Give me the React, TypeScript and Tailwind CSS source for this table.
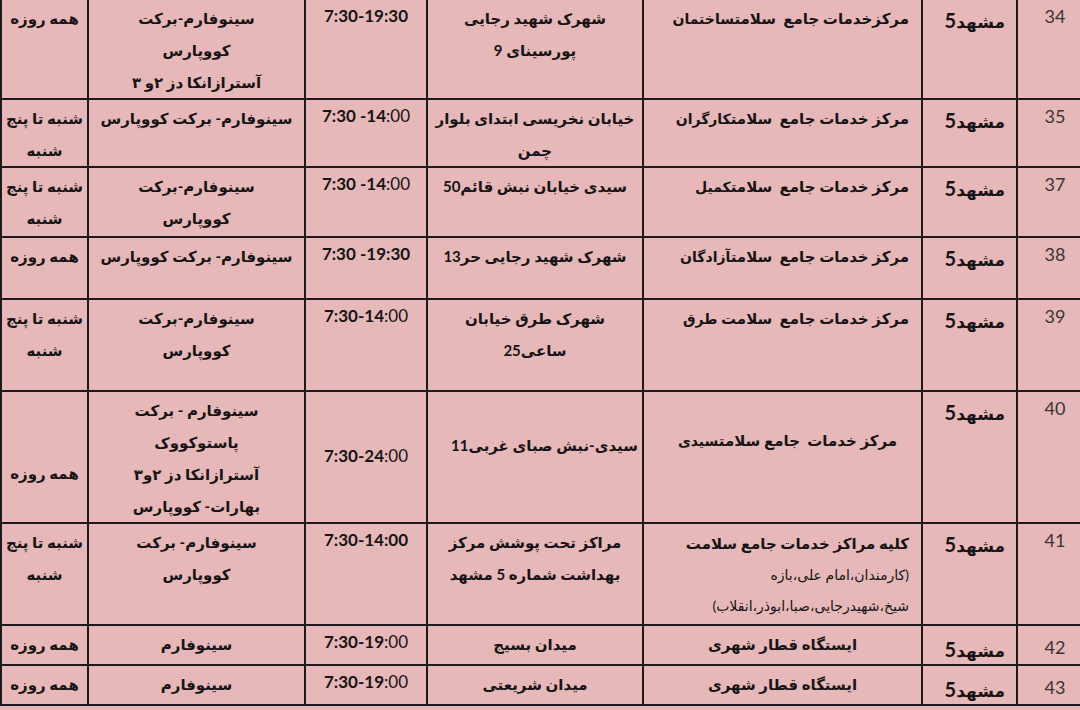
import React from 'react';

type Row = {
  num: string;
  h: string;
  days: React.ReactNode;
  daysPad?: string;
  vaccine: string[];
  hours: React.ReactNode;
  hoursPad?: string;
  address: string[];
  addressPad?: string;
  addressAlign?: string;
  center: React.ReactNode;
  centerPad?: string;
  centerAlign?: string;
  cityPad?: string;
  numPad?: string;
};

const Light = ({ children }: { children: React.ReactNode }) => (
  <span className="font-normal">{children}</span>
);

const allDays = 'همه روزه';
const weekDays = (
  <>
    شنبه تا پنج
    <br />
    شنبه
  </>
);

const Named = ({ base, name }: { base: string; name: string }) => (
  <span className="whitespace-pre">
    {base}
    <span className="font-black text-[14px]">{name}</span>
  </span>
);

const rows: Row[] = [
  {
    num: '34',
    h: 'h-[100px]',
    days: allDays,
    vaccine: ['سینوفارم-برکت', 'کووپارس', 'آسترازانکا دز ۲و ۳'],
    hours: '7:30-19:30',
    address: ['شهرک شهید رجایی', 'پورسینای 9'],
    center: <Named base="مرکزخدمات جامع  سلامت" name="ساختمان" />,
  },
  {
    num: '35',
    h: 'h-[68px]',
    days: weekDays,
    vaccine: ['سینوفارم- برکت کووپارس'],
    hours: (
      <>
        7:30 -14<Light>:00</Light>
      </>
    ),
    address: ['خیابان نخریسی ابتدای بلوار', 'چمن'],
    center: <Named base="مرکز خدمات جامع  سلامت" name="کارگران" />,
  },
  {
    num: '37',
    h: 'h-[70px]',
    days: weekDays,
    vaccine: ['سینوفارم-برکت', 'کووپارس'],
    hours: (
      <>
        7:30 -14<Light>:00</Light>
      </>
    ),
    address: ['سیدی خیابان نبش قائم50'],
    center: <Named base="مرکز خدمات جامع  سلامت" name="کمیل" />,
  },
  {
    num: '38',
    h: 'h-[62px]',
    days: allDays,
    vaccine: ['سینوفارم- برکت کووپارس'],
    hours: '7:30 -19:30',
    address: ['شهرک شهید رجایی حر13'],
    center: <Named base="مرکز خدمات جامع  سلامت" name="آزادگان" />,
  },
  {
    num: '39',
    h: 'h-[92px]',
    days: weekDays,
    vaccine: ['سینوفارم-برکت', 'کووپارس'],
    hours: (
      <>
        7:30-14<Light>:00</Light>
      </>
    ),
    address: ['شهرک طرق خیابان', 'ساعی25'],
    center: <Named base="مرکز خدمات جامع  سلامت " name="طرق" />,
  },
  {
    num: '40',
    h: 'h-[132px]',
    days: allDays,
    daysPad: 'pt-[65px]',
    vaccine: ['سینوفارم - برکت', 'پاستوکووک', 'آسترازانکا دز ۲و۳', 'بهارات- کووپارس'],
    hours: (
      <>
        7:30-24<Light>:00</Light>
      </>
    ),
    hoursPad: 'pt-[48px]',
    address: ['سیدی-نبش صبای غربی11'],
    addressPad: 'pt-[37px]',
    addressAlign: 'text-right pr-[4px]',
    center: <Named base="مرکز خدمات  جامع سلامت" name="سیدی" />,
    centerPad: 'pt-[32px]',
    centerAlign: 'text-center pl-[10px]',
  },
  {
    num: '41',
    h: 'h-[102px]',
    days: weekDays,
    vaccine: ['سینوفارم- برکت', 'کووپارس'],
    hours: '7:30-14:00',
    address: ['مراکز تحت پوشش مرکز', 'بهداشت شماره 5 مشهد'],
    center: (
      <div className="leading-[31px]">
        <div>کلیه مراکز خدمات جامع سلامت</div>
        <div className="font-normal text-[14px]">(کارمندان،امام علی،بازه</div>
        <div className="font-normal text-[14px]">شیخ،شهیدرجایی،صبا،ابوذر،انقلاب)</div>
      </div>
    ),
    centerPad: 'pt-[4px]',
  },
  {
    num: '42',
    h: 'h-[40px]',
    days: allDays,
    vaccine: ['سینوفارم'],
    hours: (
      <>
        7:30-19<Light>:00</Light>
      </>
    ),
    address: ['میدان بسیج'],
    center: 'ایستگاه قطار شهری',
    centerAlign: 'text-center',
    cityPad: 'pt-[7px]',
    numPad: 'pt-[5px]',
  },
  {
    num: '43',
    h: 'h-[40px]',
    days: allDays,
    vaccine: ['سینوفارم'],
    hours: (
      <>
        7:30-19<Light>:00</Light>
      </>
    ),
    address: ['میدان شریعتی'],
    center: 'ایستگاه قطار شهری',
    centerAlign: 'text-center',
    cityPad: 'pt-[7px]',
    numPad: 'pt-[5px]',
  },
];

const cell = 'shrink-0 border-r-2 border-[#1c1a1a] overflow-hidden';

export default function App() {
  return (
    <div
      className="w-[1080px] h-[710px] overflow-hidden bg-[#e6b8b9] text-[#161414] font-bold text-[15px] leading-[32px]"
      style={{ fontFamily: "Lato, 'DejaVu Sans', sans-serif" }}
    >
      <div className="border-l-2 border-[#1c1a1a]">
        {rows.map((r) => (
          <div key={r.num} className={`flex border-b-2 border-[#1c1a1a] ${r.h}`}>
            {/* روزها */}
            <div dir="rtl" className={`${cell} w-[87px] text-center ${r.daysPad ?? 'pt-[2px]'}`}>
              {r.days}
            </div>
            {/* واکسن */}
            <div dir="rtl" className={`${cell} w-[217px] text-center pt-[2px]`}>
              {r.vaccine.map((v) => (
                <div key={v}>{v}</div>
              ))}
            </div>
            {/* ساعت */}
            <div
              dir="ltr"
              className={`${cell} w-[122px] text-center text-[17px] ${r.hoursPad ?? 'pt-0'}`}
            >
              {r.hours}
            </div>
            {/* آدرس */}
            <div
              dir="rtl"
              className={`${cell} w-[216px] ${r.addressAlign ?? 'text-center'} ${r.addressPad ?? 'pt-[2px]'}`}
            >
              {r.address.map((a) => (
                <div key={a}>{a}</div>
              ))}
            </div>
            {/* مرکز */}
            <div
              dir="rtl"
              className={`${cell} w-[279px] ${r.centerAlign ?? 'text-right pr-[12px]'} ${r.centerPad ?? 'pt-[2px]'}`}
            >
              {r.center}
            </div>
            {/* شهر */}
            <div
              dir="rtl"
              className={`${cell} w-[95px] text-right pr-[11px] text-[17px] ${r.cityPad ?? 'pt-[4px]'}`}
            >
              مشهد<span className="text-[20px]">5</span>
            </div>
            {/* ردیف */}
            <div
              className={`flex-1 text-center pl-[12px] font-normal text-[18px] text-[#3a3535] ${r.numPad ?? 'pt-0'}`}
            >
              {r.num}
            </div>
          </div>
        ))}
      </div>
    </div>
  );
}
